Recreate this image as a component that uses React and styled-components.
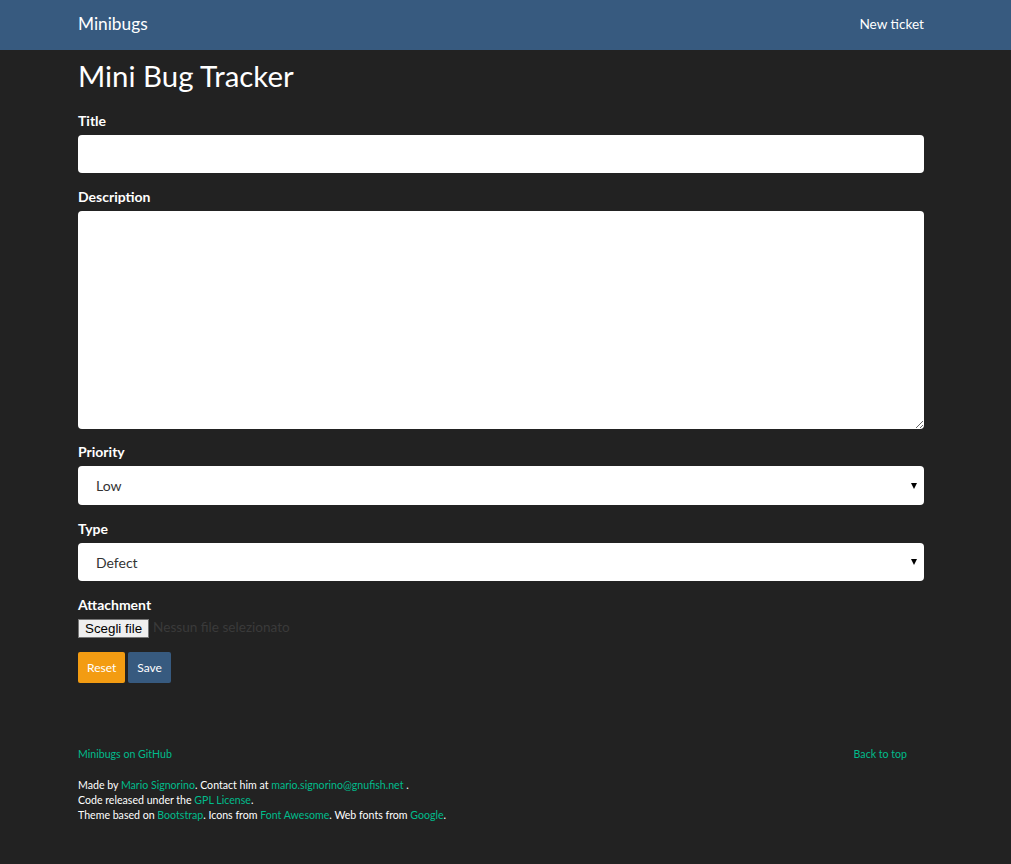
import React from 'react';
import styled, { createGlobalStyle } from 'styled-components';

const GlobalStyle = createGlobalStyle`
  html, body {
    margin: 0;
    padding: 0;
    background: #222222;
  }
  body {
    font-family: 'Lato', 'Helvetica Neue', Arial, sans-serif;
    font-size: 14px;
    color: #ffffff;
  }
  * { box-sizing: border-box; }
`;

const Page = styled.div`
  min-height: 864px;
  background: #222222;
`;

const Navbar = styled.nav`
  height: 50px;
  background: #375a7f;
`;

const NavInner = styled.div`
  width: 846px;
  margin-left: 78px;
  height: 100%;
  display: flex;
  align-items: center;
  justify-content: space-between;
`;

const Brand = styled.a`
  font-size: 17.3px;
  color: #ffffff;
  text-decoration: none;
  margin-top: -3px;
`;

const NavLink = styled.a`
  font-size: 13.6px;
  color: #ffffff;
  text-decoration: none;
  margin-top: -3px;
`;

const Container = styled.div`
  width: 846px;
  margin-left: 78px;
`;

const H1 = styled.h1`
  font-size: 29.4px;
  font-weight: 400;
  line-height: 33px;
  margin: 9px 0 19px;
`;

const Group = styled.div`
  margin-bottom: 14px;
`;

const Label = styled.label`
  display: block;
  font-weight: 700;
  font-size: 14px;
  line-height: 20px;
  margin-bottom: 4px;
`;

const Input = styled.input`
  display: block;
  width: 100%;
  height: 38px;
  border: none;
  border-radius: 4px;
  background: #ffffff;
  padding: 6px 18px;
  font-family: inherit;
  font-size: 14px;
  color: #333;
`;

const TextArea = styled.textarea`
  display: block;
  width: 100%;
  height: 218px;
  border: none;
  border-radius: 4px;
  background: #ffffff;
  padding: 8px 18px;
  font-family: inherit;
  font-size: 14px;
  color: #333;
  resize: vertical;
`;

const SelectWrap = styled.div`
  position: relative;
  &::after {
    content: '';
    position: absolute;
    right: 7px;
    top: 50%;
    margin-top: -3px;
    border-left: 3.5px solid transparent;
    border-right: 3.5px solid transparent;
    border-top: 6px solid #000;
  }
`;

const Select = styled.select`
  display: block;
  width: 100%;
  height: ${p => p.$h}px;
  border: none;
  border-radius: 4px;
  background: #ffffff;
  padding: 0 18px;
  font-family: inherit;
  font-size: 14px;
  color: #333;
  appearance: none;
  -webkit-appearance: none;
`;

const FileRow = styled.div`
  display: flex;
  align-items: center;
  gap: 4px;
  margin-top: 2px;
`;

const FileButton = styled.button`
  font-family: 'Liberation Sans', Arial, sans-serif;
  font-size: 13.33px;
  height: 19px;
  padding: 0 6px;
  background: #efefef;
  border: 1px solid #767676;
  border-radius: 0;
  color: #000;
  line-height: 17px;
`;

const FileText = styled.span`
  font-size: 13.6px;
  color: #3a3a3a;
  margin-top: -3px;
`;

const Actions = styled.div`
  display: flex;
  gap: 3px;
  margin-top: 12px;
`;

const Btn = styled.button`
  height: 31px;
  padding: 0 9px;
  border: none;
  border-radius: 2px;
  background: ${p => p.$bg};
  color: #ffffff;
  font-family: inherit;
  font-size: 12px;
`;

const Footer = styled.footer`
  width: 846px;
  margin-left: 78px;
  padding-top: 64px;
  font-size: 10.6px;
`;

const FooterTop = styled.div`
  display: flex;
  justify-content: space-between;
  padding-right: 17px;
  line-height: 15px;
  margin-bottom: 16px;
`;

const Link = styled.a`
  color: #00bc8c;
  text-decoration: none;
`;

const FooterLine = styled.p`
  margin: 0;
  line-height: 15px;
`;

export default function App() {
  return (
    <Page>
      <GlobalStyle />
      <Navbar>
        <NavInner>
          <Brand href="#">Minibugs</Brand>
          <NavLink href="#">New ticket</NavLink>
        </NavInner>
      </Navbar>
      <Container>
        <H1>Mini Bug Tracker</H1>
        <form>
          <Group>
            <Label>Title</Label>
            <Input type="text" />
          </Group>
          <Group>
            <Label>Description</Label>
            <TextArea />
          </Group>
          <Group style={{ marginTop: -1 }}>
            <Label>Priority</Label>
            <SelectWrap>
              <Select $h={39} defaultValue="low">
                <option value="low">Low</option>
                <option value="medium">Medium</option>
                <option value="high">High</option>
              </Select>
            </SelectWrap>
          </Group>
          <Group>
            <Label>Type</Label>
            <SelectWrap>
              <Select $h={38} defaultValue="defect">
                <option value="defect">Defect</option>
                <option value="feature">Feature</option>
              </Select>
            </SelectWrap>
          </Group>
          <Group>
            <Label>Attachment</Label>
            <FileRow>
              <FileButton type="button">Scegli file</FileButton>
              <FileText>Nessun file selezionato</FileText>
            </FileRow>
          </Group>
          <Actions>
            <Btn type="reset" $bg="#f39c12">Reset</Btn>
            <Btn type="button" $bg="#375a7f">Save</Btn>
          </Actions>
        </form>
      </Container>
      <Footer>
        <FooterTop>
          <Link href="#">Minibugs on GitHub</Link>
          <Link href="#">Back to top</Link>
        </FooterTop>
        <FooterLine>
          Made by <Link href="#">Mario Signorino</Link>. Contact him at <Link href="#">mario.signorino@gnufish.net</Link> .
        </FooterLine>
        <FooterLine>
          Code released under the <Link href="#">GPL License</Link>.
        </FooterLine>
        <FooterLine>
          Theme based on <Link href="#">Bootstrap</Link>. Icons from <Link href="#">Font Awesome</Link>. Web fonts from <Link href="#">Google</Link>.
        </FooterLine>
      </Footer>
    </Page>
  );
}
